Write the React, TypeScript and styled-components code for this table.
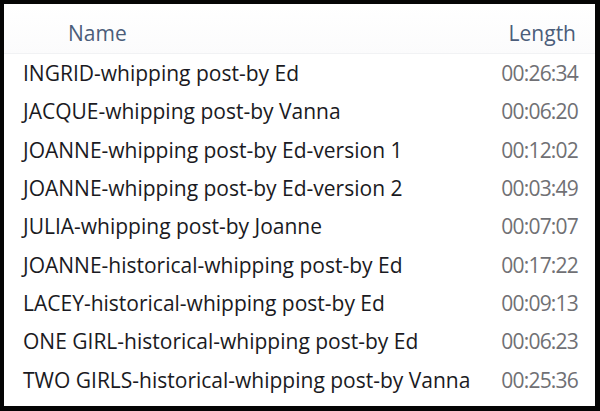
import React from 'react'
import styled, { createGlobalStyle } from 'styled-components'

const Global = createGlobalStyle`
  html, body { margin: 0; padding: 0; background: #000; }
  body { font-family: "Open Sans", "Noto Sans", sans-serif; }
`

const Frame = styled.div`
  width: 600px;
  height: 411px;
  box-sizing: border-box;
  background: #050505;
  padding: 4px 5px 5px 4px;
`

const Panel = styled.div`
  height: 100%;
  background: #fff;
  display: flex;
  flex-direction: column;
`

const Header = styled.div`
  height: 50px;
  box-sizing: border-box;
  padding: 8px 19px 0 64px;
  display: grid;
  grid-template-columns: 1fr auto;
  align-items: center;
  background: linear-gradient(#fff, #fbfbfc);
  border-bottom: 1px solid #f1f2f4;
  color: #4b5d7a;
  font-size: 21px;
`

const Row = styled.div`
  height: 38.3px;
  display: grid;
  grid-template-columns: 1fr auto;
  align-items: center;
  padding: 0 17px 0 19px;
  font-size: 21px;
  color: #1a1a22;
  white-space: nowrap;
`

const Time = styled.span`
  color: #707074;
  letter-spacing: -0.8px;
`

const files: [string, string][] = [
  ['INGRID-whipping post-by Ed', '00:26:34'],
  ['JACQUE-whipping post-by Vanna', '00:06:20'],
  ['JOANNE-whipping post-by Ed-version 1', '00:12:02'],
  ['JOANNE-whipping post-by Ed-version 2', '00:03:49'],
  ['JULIA-whipping post-by Joanne', '00:07:07'],
  ['JOANNE-historical-whipping post-by Ed', '00:17:22'],
  ['LACEY-historical-whipping post-by Ed', '00:09:13'],
  ['ONE GIRL-historical-whipping post-by Ed', '00:06:23'],
  ['TWO GIRLS-historical-whipping post-by Vanna', '00:25:36'],
]

export default function App() {
  return <Frame>
    <Global/>
    <Panel>
      <Header>
        <span>Name</span>
        <span>Length</span>
      </Header>
      {files.map(([name, len]) => <Row key={name}>
        <span>{name}</span>
        <Time>{len}</Time>
      </Row>)}
    </Panel>
  </Frame>
}
